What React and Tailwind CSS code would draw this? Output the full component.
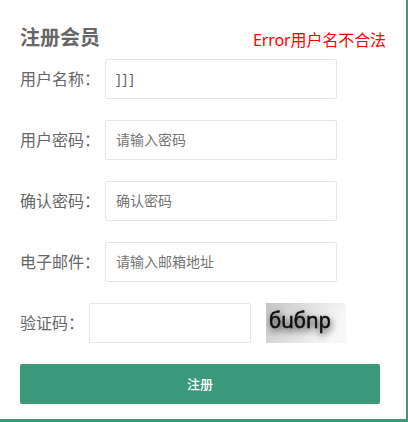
const cjk = "font-['Noto_Sans','Noto_Sans_CJK_SC',sans-serif]";

function Row({ label, value, placeholder }) {
    return (
        <div className="flex items-center h-10 mb-[21px]">
            <label className="w-[85px] shrink-0 pb-px text-base text-[#666]">{label}</label>
            <input
                type="text"
                defaultValue={value}
                placeholder={placeholder}
                className={`w-[232px] h-10 pl-[10px] pr-2 pb-[2px] text-sm text-[#666] placeholder:text-[#757575] bg-white border border-[#e6e6e6] rounded-[2px] outline-none ${value ? "tracking-[2px]" : ""}`}
            />
        </div>
    );
}

// captcha is a picture in the original page, so it stays a small svg
function Captcha() {
    return (
        <svg width="80" height="40" viewBox="0 0 80 40" className="ml-[15px] shrink-0">
            <defs>
                <linearGradient id="bg" x1="0" y1="0" x2="1" y2="0.3">
                    <stop offset="0" stopColor="#c4c4c4" />
                    <stop offset="0.5" stopColor="#e0e0e0" />
                    <stop offset="1" stopColor="#f8f8f8" />
                </linearGradient>
                <filter id="shadow" x="-20%" y="-60%" width="140%" height="220%">
                    <feDropShadow dx="1" dy="3" stdDeviation="3.6" floodColor="#000" floodOpacity="0.8" />
                </filter>
            </defs>
            <rect width="80" height="40" fill="url(#bg)" />
            <text x="3" y="25" textLength="62" lengthAdjust="spacingAndGlyphs" fontFamily="Noto Sans, sans-serif" fontSize="22" fill="#0a0a0a" stroke="#0a0a0a" strokeWidth="0.5" filter="url(#shadow)">бuбnp</text>
        </svg>
    );
}

export default function App() {
    return (
        <div className={`w-[408px] h-[422px] bg-[#3a997b] overflow-hidden ${cjk}`}>
            <div className="w-[406px] h-[419px] bg-white pl-5 pt-[22px]">
                <div className="flex items-start justify-between pr-5 h-[37px]">
                    <h2 className="text-xl font-bold leading-[30px] mt-px text-[#666]">注册会员</h2>
                    <span className="text-base leading-6 tracking-[-0.1px] text-[#ff0000] mt-[6px]">Error用户名不合法</span>
                </div>
                <Row label="用户名称：" value="]]]" />
                <Row label="用户密码：" placeholder="请输入密码" />
                <Row label="确认密码：" placeholder="确认密码" />
                <Row label="电子邮件：" placeholder="请输入邮箱地址" />
                <div className="flex items-center h-10 mb-[21px]">
                    <label className="w-[69px] shrink-0 pb-px text-base text-[#666]">验证码：</label>
                    <input type="text" className="w-[162px] h-10 bg-white border border-[#e6e6e6] rounded-[2px] outline-none" />
                    <Captcha />
                </div>
                <button type="button" className="block w-[360px] h-10 pt-px bg-[#3a997b] rounded-[2px] text-white text-[13px] font-medium">注册</button>
            </div>
        </div>
    );
}
